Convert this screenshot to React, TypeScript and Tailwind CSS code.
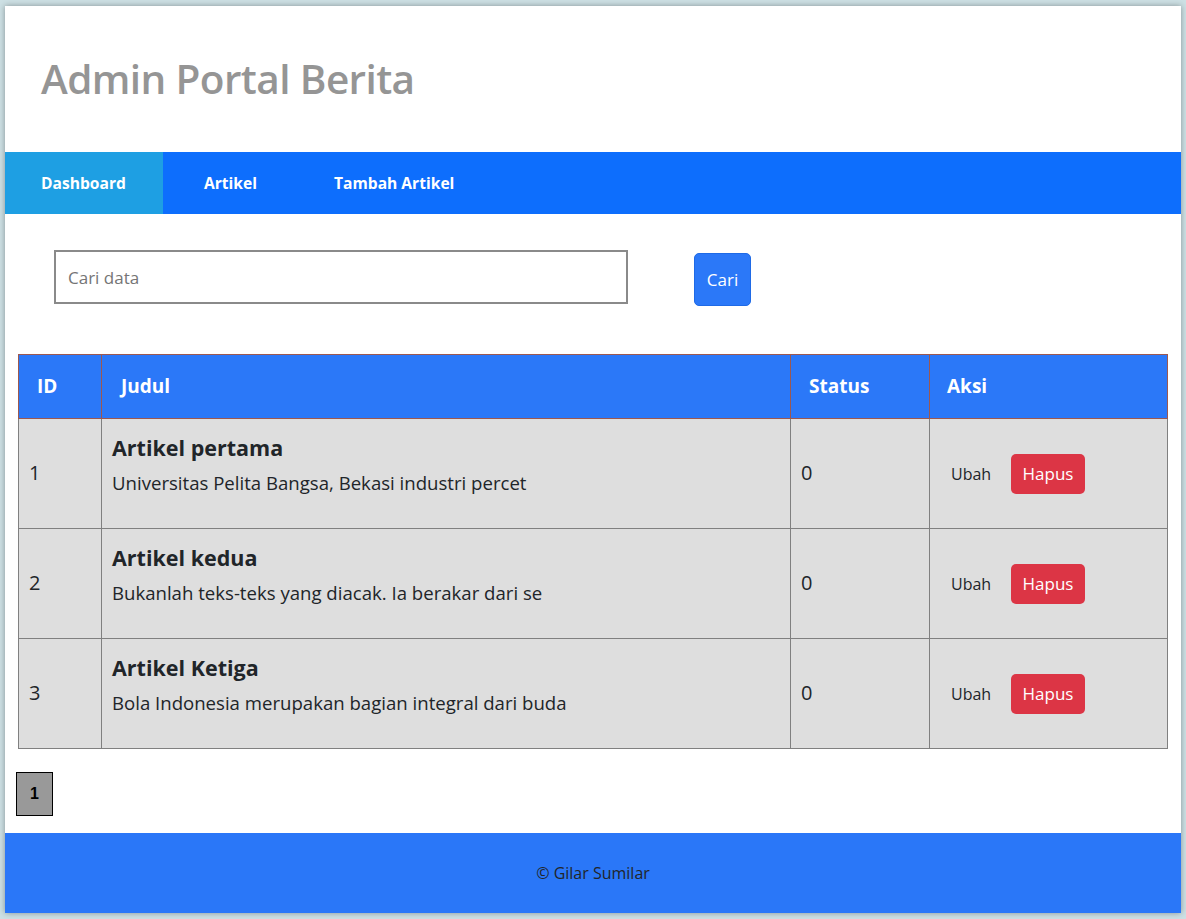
import React from "react";

const rows = [
  { id: 1, judul: "Artikel pertama", isi: "Universitas Pelita Bangsa, Bekasi industri percet", status: 0 },
  { id: 2, judul: "Artikel kedua", isi: "Bukanlah teks-teks yang diacak. Ia berakar dari se", status: 0 },
  { id: 3, judul: "Artikel Ketiga", isi: "Bola Indonesia merupakan bagian integral dari buda", status: 0 },
];

export default function App() {
  return (
    <div className="min-h-[919px] bg-[#cde0e4] pl-[5px] pt-[6px] font-['Open_Sans',sans-serif]">
      <div className="w-[1176px] bg-white shadow-[0_0_6px_rgba(0,0,0,0.35)]">
        {/* header */}
        <header className="h-[146px] flex items-center px-[36px]">
          <h1 className="text-[40.5px] text-[#959595] font-semibold tracking-[-0.6px]">Admin Portal Berita</h1>
        </header>

        {/* nav */}
        <nav className="h-[62px] bg-[#0d6efd] flex gap-[5px] text-white font-bold text-[15.6px]">
          <a className="px-[36px] pt-[1px] flex items-center bg-[#1e9fe3] w-[158px]">Dashboard</a>
          <a className="px-[36px] pt-[1px] flex items-center">Artikel</a>
          <a className="px-[36px] pt-[1px] flex items-center">Tambah Artikel</a>
        </nav>

        {/* search */}
        <div className="flex items-start pt-[36px] pl-[49px]">
          <input
            placeholder="Cari data"
            className="w-[574px] h-[54px] border-2 border-[#8a8a8a] px-[12px] text-[17px] placeholder:text-[#757575] outline-none"
          />
          <button className="ml-[66px] mt-[3px] h-[53px] w-[57px] bg-[#2b78f8] border border-[#1f6ae6] rounded-[5px] text-white text-[17px]">
            Cari
          </button>
        </div>

        {/* table */}
        <div className="px-[13px] pt-[48px]">
          <table className="w-[1150px] table-fixed border-separate border-spacing-0">
            <thead>
              <tr className="h-[65px] bg-[#2b78f8] text-white text-[19px] font-bold text-left">
                <th className="w-[84px] border border-[#9c5850] pl-[18px]">ID</th>
                <th className="w-[689px] border-r border-y border-[#9c5850] pl-[19px]">Judul</th>
                <th className="w-[139px] border-r border-y border-[#9c5850] pl-[18px]">Status</th>
                <th className="w-[238px] border-r border-y border-[#9c5850] pl-[17px]">Aksi</th>
              </tr>
            </thead>
            <tbody>
              {rows.map((r) => (
                <tr key={r.id} className="h-[110px] bg-[#dedede] text-[#212529]">
                  <td className="border-x border-b border-[#808080] pl-[10px] text-[20px] align-middle pb-[2px]">{r.id}</td>
                  <td className="border-r border-b border-[#808080] pl-[10px] align-top pt-[13px]">
                    <div className="text-[21.5px] font-bold leading-[32px]">{r.judul}</div>
                    <div className="text-[18.6px] leading-[38px]">{r.isi}</div>
                  </td>
                  <td className="border-r border-b border-[#808080] pl-[10px] text-[20px] align-middle pb-[1px]">{r.status}</td>
                  <td className="border-r border-b border-[#808080] pl-[21px] align-middle">
                    <div className="flex items-center">
                      <span className="text-[16px] text-[#212529] w-[60px]">Ubah</span>
                      <button className="h-[40px] w-[74px] bg-[#dc3545] text-white text-[17px] rounded-[5px]">Hapus</button>
                    </div>
                  </td>
                </tr>
              ))}
            </tbody>
          </table>
        </div>

        {/* pagination */}
        <div className="pt-[23px] pb-[17px] pl-[11px]">
          <span className="inline-flex items-center justify-center w-[37px] h-[44px] bg-[#999999] border border-black font-bold text-[16px] text-black font-['Liberation_Sans',sans-serif]">
            1
          </span>
        </div>

        {/* footer */}
        <footer className="h-[80px] bg-[#2a77f8] flex items-center justify-center text-[16px] text-[#212529]">
          © Gilar Sumilar
        </footer>
      </div>
    </div>
  );
}
